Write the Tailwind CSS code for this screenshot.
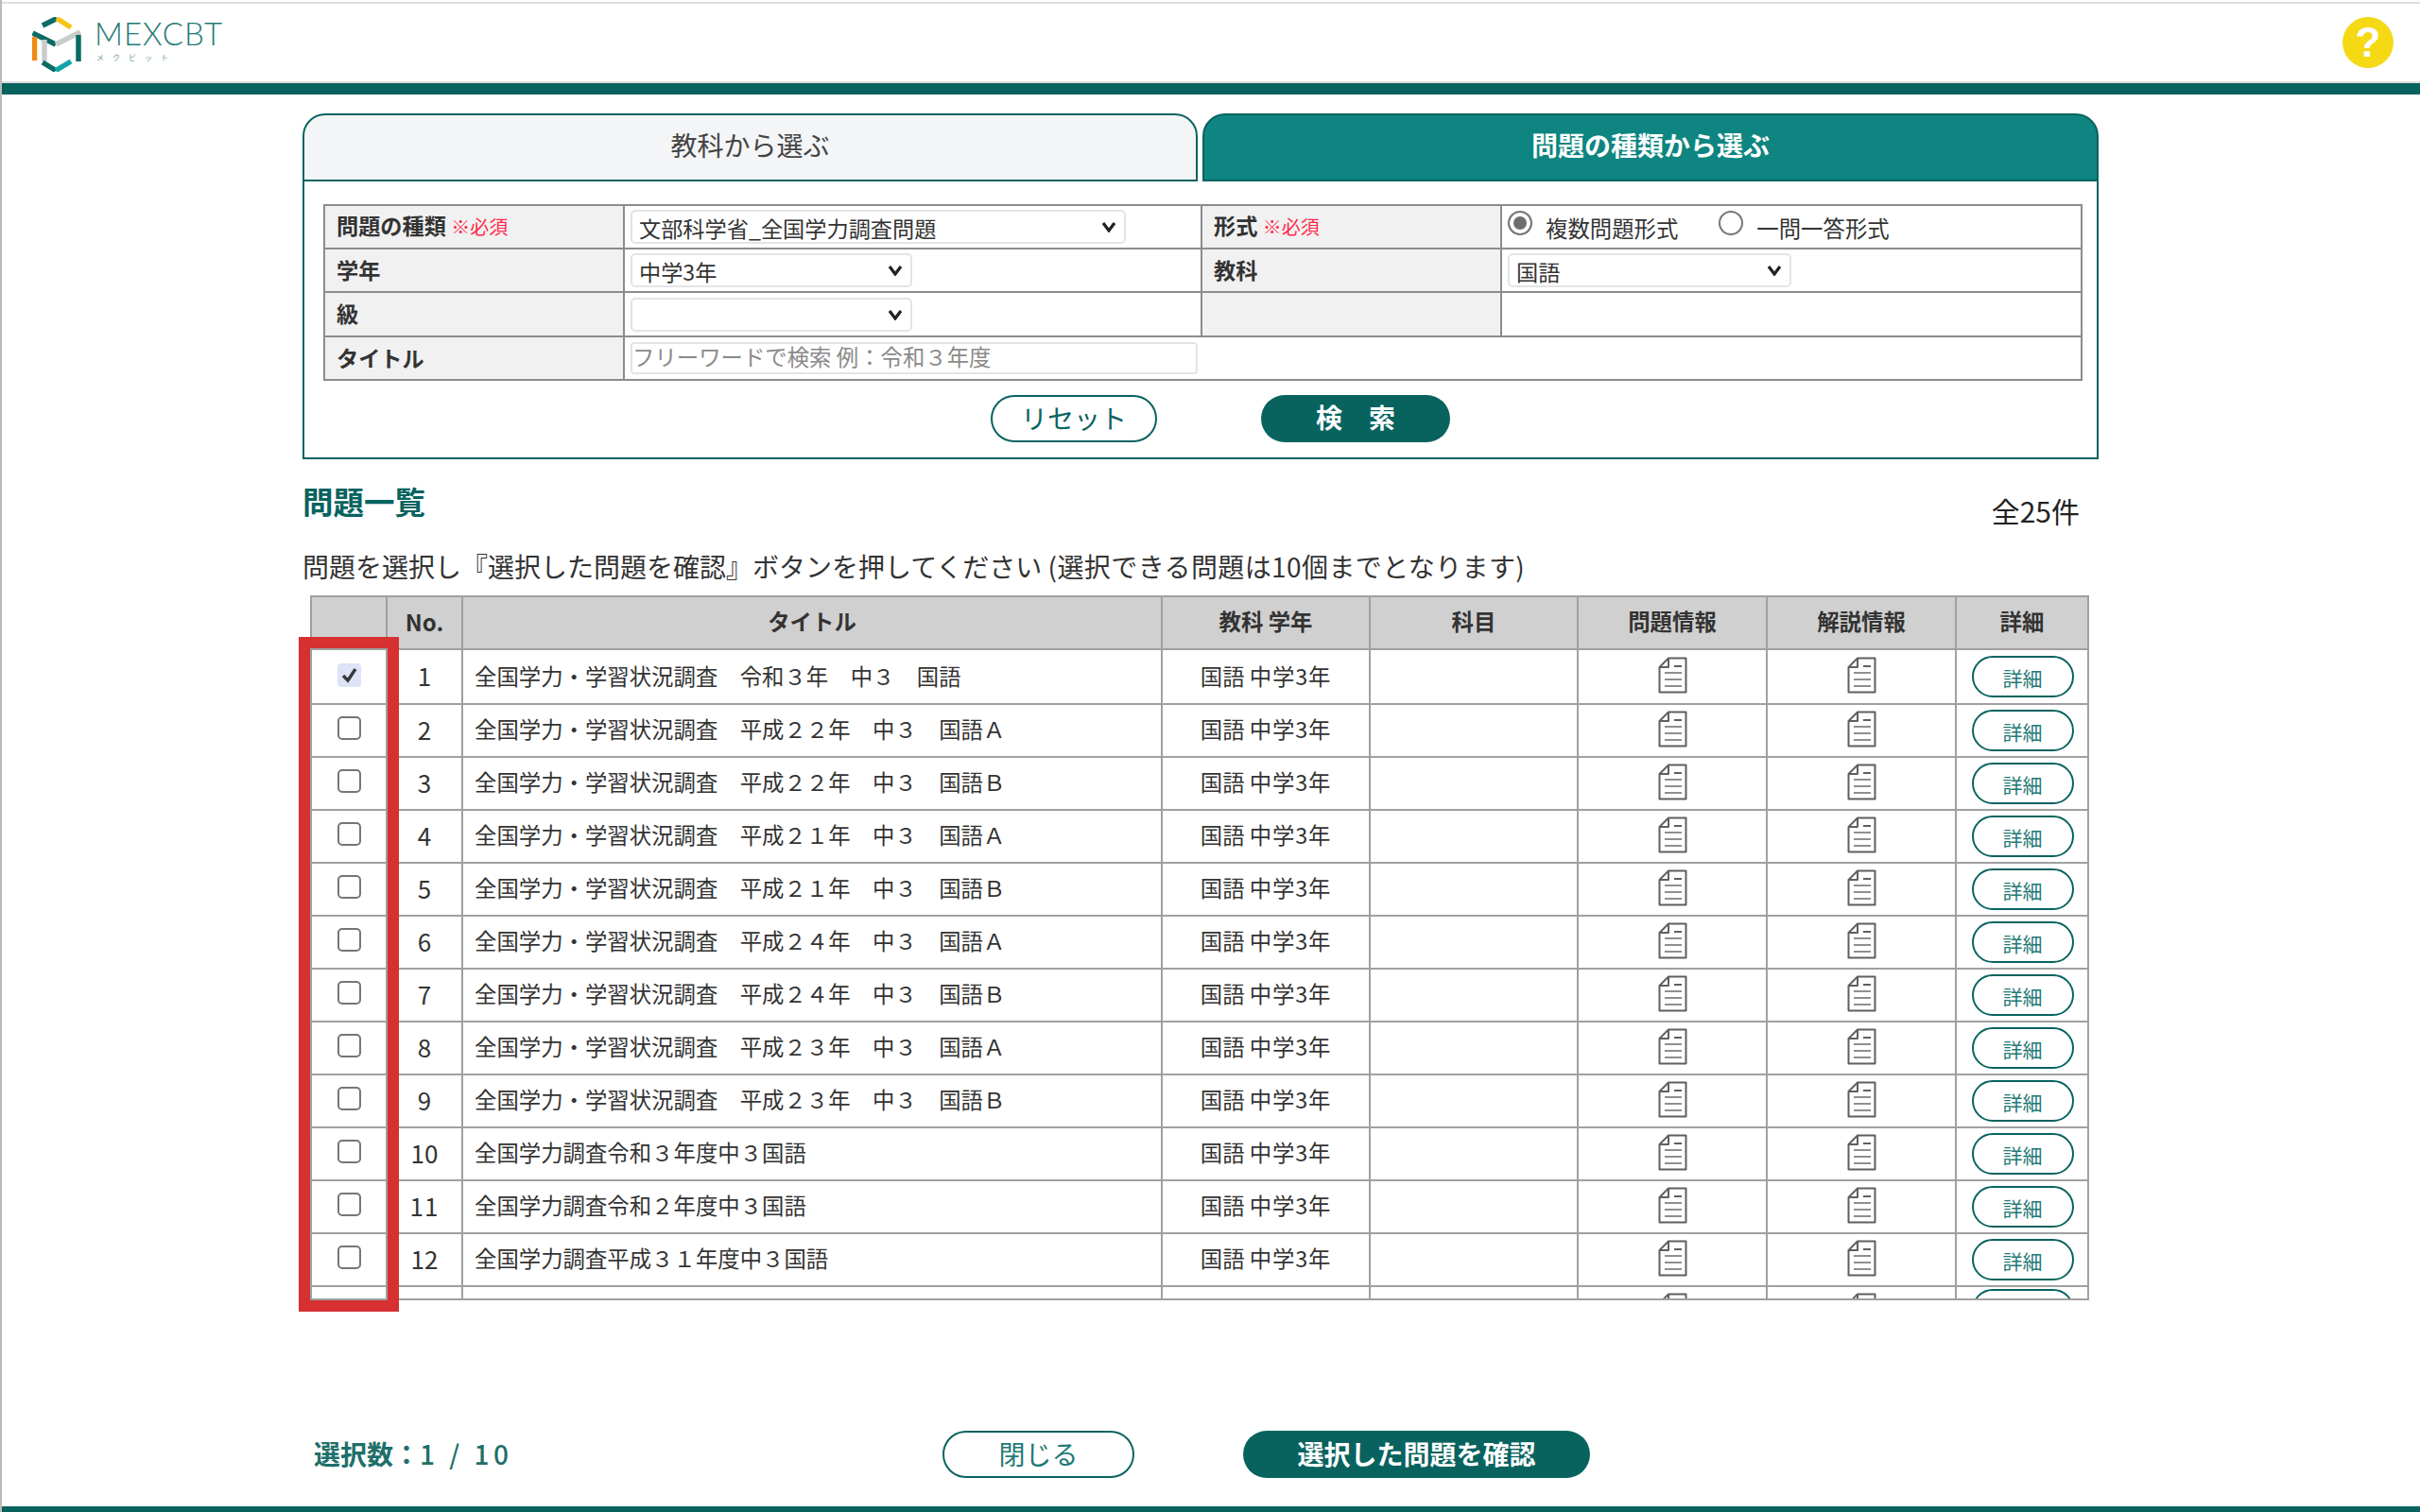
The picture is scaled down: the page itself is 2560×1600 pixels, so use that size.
<!DOCTYPE html>
<html lang="ja">
<head>
<meta charset="utf-8">
<title>MEXCBT</title>
<script src="https://cdn.jsdelivr.net/npm/@tailwindcss/browser@4"></script>
</head>
<body class="bg-white font-['Noto_Sans_CJK_JP','Noto_Sans',sans-serif] text-[#333]">
<svg class="hidden"><defs>
<symbol id="doc" viewBox="0 0 31 39"><g fill="none"><path d="M11 1.5H29.5V37.5H1.5V11Z M11 1.5V11H1.5" stroke="#5f5f5f" stroke-width="2" stroke-linejoin="round"/><path d="M17 10H25" stroke="#5f5f5f" stroke-width="2"/><path d="M7 17H25M7 24H25M7 31H25" stroke="#8f8f8f" stroke-width="2"/></g></symbol>
</defs></svg>
<div class="relative flex flex-col w-[2560px] h-[1600px] overflow-hidden border-l-2 border-[#bcbcbc]">
  <div class="absolute left-[-2px] top-[580px] w-[2px] h-[200px] bg-[#b588a8]"></div>

  <header class="mt-[2px] h-[86px] flex items-center justify-between border-t-2 border-b-2 border-[#dedede] pl-[32px] pr-[28px]">
    <div class="flex items-start">
      <svg class="w-[52px] h-[58px] mt-[3px]" viewBox="0 0 52 58" fill="none" stroke-width="5.5">
        <path d="M11 9L26 1.5" stroke="#0b6b66"/>
        <path d="M26 1.5L41 11" stroke="#f5c518"/>
        <path d="M0.5 17L25 29" stroke="#0b6b66"/>
        <path d="M25 29L51 16" stroke="#c9cccc"/>
        <path d="M2.5 21V46" stroke="#f08a12"/>
        <path d="M13 24V47" stroke="#c9cccc"/>
        <path d="M49 19V47" stroke="#0b6b66"/>
        <path d="M11 48L25 56.5" stroke="#0b6b66"/>
        <path d="M25 56.5L41 47" stroke="#12a5a8"/>
      </svg>
      <div class="ml-[14px] mt-[1px] flex flex-col">
        <span class="font-['Lato',sans-serif] font-light text-[33px] leading-[38px] tracking-[1px] text-[#1f7a75]">MEXCBT</span>
        <span class="ml-[2px] mt-[2px] text-[8px] leading-[10px] tracking-[9px] text-[#6f9a97]">メクビット</span>
      </div>
    </div>
    <div class="w-[54px] h-[54px] rounded-full bg-[#f4d914] flex items-center justify-center text-white font-['Liberation_Sans',sans-serif] font-bold text-[44px] leading-none">?</div>
  </header>
  <div class="h-[12px] bg-[#08635f]"></div>

  <main class="pl-[318px] w-[2218px]">
    <div class="mt-[20px] flex gap-[5px] h-[72px]">
      <div class="w-[947px] flex items-center justify-center pb-[7px] rounded-t-[24px] border-2 border-[#08635f] bg-[#f4f5f7] text-[28px] text-[#444]">教科から選ぶ</div>
      <div class="w-[948px] flex items-center justify-center pb-[7px] rounded-t-[24px] border-2 border-[#08635f] bg-[#0e8580] text-[28px] font-bold text-white">問題の種類から選ぶ</div>
    </div>

    <section class="border-2 border-t-0 border-[#08635f] pl-[20px] pt-[24px] pb-[16px] w-[1900px]">
      <table class="table-fixed border-collapse w-[1860px] text-[23.4px]">
        <colgroup><col class="w-[317px]"><col class="w-[611px]"><col class="w-[317px]"><col class="w-[614px]"></colgroup>
        <tbody>
          <tr class="h-[46px]">
            <th class="border-2 border-[#8c8c8c] bg-[#f1f1f1] text-left font-bold pl-[12px] pb-[3px] text-[23.2px] whitespace-nowrap">問題の種類 <span class="font-normal text-[20px] text-[#ff2a4a]">※必須</span></th>
            <td class="border-2 border-[#8c8c8c] pl-[6px]">
              <div class="relative w-[524px] h-[36px]">
                <select class="appearance-none block w-full h-full py-0 border-2 border-[#e4e4e4] rounded-[5px] bg-white pl-[7px] leading-normal text-[23.2px]"><option>文部科学省_全国学力調査問題</option></select>
                <svg class="absolute right-[10px] top-[12px] w-[16px] h-[12px] pointer-events-none" viewBox="0 0 16 12" fill="none"><path d="M2 2L8 10L14 2" stroke="#222" stroke-width="3.2"/></svg>
              </div>
            </td>
            <th class="border-2 border-[#8c8c8c] bg-[#f1f1f1] text-left font-bold pl-[12px] pb-[3px] text-[23.2px] whitespace-nowrap">形式 <span class="font-normal text-[20px] text-[#ff2a4a]">※必須</span></th>
            <td class="border-2 border-[#8c8c8c] pl-[6px]">
              <div class="flex items-start h-[40px]">
                <input type="radio" name="fmt" checked class="appearance-none w-[26px] h-[26px] mt-[3px] rounded-full border-2 border-[#777] bg-[#6d6d6d] shadow-[inset_0_0_0_4px_white]">
                <span class="ml-[14px] mt-[5px] leading-[32px] whitespace-nowrap">複数問題形式</span>
                <input type="radio" name="fmt" class="appearance-none w-[26px] h-[26px] mt-[3px] ml-[43px] rounded-full border-2 border-[#777] bg-white">
                <span class="ml-[14px] mt-[5px] leading-[32px] whitespace-nowrap">一問一答形式</span>
              </div>
            </td>
          </tr>
          <tr class="h-[46px]">
            <th class="border-2 border-[#8c8c8c] bg-[#f1f1f1] text-left font-bold pl-[12px] pb-[2px] text-[23.2px]">学年</th>
            <td class="border-2 border-[#8c8c8c] pl-[6px]">
              <div class="relative w-[298px] h-[36px]">
                <select class="appearance-none block w-full h-full py-0 border-2 border-[#e4e4e4] rounded-[5px] bg-white pl-[7px] leading-normal text-[23.2px]"><option>中学3年</option></select>
                <svg class="absolute right-[10px] top-[12px] w-[16px] h-[12px] pointer-events-none" viewBox="0 0 16 12" fill="none"><path d="M2 2L8 10L14 2" stroke="#222" stroke-width="3.2"/></svg>
              </div>
            </td>
            <th class="border-2 border-[#8c8c8c] bg-[#f1f1f1] text-left font-bold pl-[12px] pb-[2px] text-[23.2px]">教科</th>
            <td class="border-2 border-[#8c8c8c] pl-[6px]">
              <div class="relative w-[300px] h-[36px]">
                <select class="appearance-none block w-full h-full py-0 border-2 border-[#e4e4e4] rounded-[5px] bg-white pl-[7px] leading-normal text-[23.2px]"><option>国語</option></select>
                <svg class="absolute right-[10px] top-[12px] w-[16px] h-[12px] pointer-events-none" viewBox="0 0 16 12" fill="none"><path d="M2 2L8 10L14 2" stroke="#222" stroke-width="3.2"/></svg>
              </div>
            </td>
          </tr>
          <tr class="h-[47px]">
            <th class="border-2 border-[#8c8c8c] bg-[#f1f1f1] text-left font-bold pl-[12px] pb-[2px] text-[23.2px]">級</th>
            <td class="border-2 border-[#8c8c8c] pl-[6px]">
              <div class="relative w-[298px] h-[36px]">
                <select class="appearance-none block w-full h-full py-0 border-2 border-[#e4e4e4] rounded-[5px] bg-white pl-[7px] leading-normal text-[23.2px]"><option></option></select>
                <svg class="absolute right-[10px] top-[12px] w-[16px] h-[12px] pointer-events-none" viewBox="0 0 16 12" fill="none"><path d="M2 2L8 10L14 2" stroke="#222" stroke-width="3.2"/></svg>
              </div>
            </td>
            <td class="border-2 border-[#8c8c8c] bg-[#f1f1f1]"></td>
            <td class="border-2 border-[#8c8c8c]"></td>
          </tr>
          <tr class="h-[46px]">
            <th class="border-2 border-[#8c8c8c] bg-[#f1f1f1] text-left font-bold pl-[12px] pb-[2px] text-[23.2px]">タイトル</th>
            <td colspan="3" class="border-2 border-[#8c8c8c] pl-[6px]">
              <input type="text" placeholder="フリーワードで検索 例：令和３年度" class="block w-[600px] h-[34px] border-2 border-[#e4e4e4] rounded-[4px] pl-0 pb-[2px] text-[23.4px] leading-normal placeholder:text-[#8a8a8a]">
            </td>
          </tr>
        </tbody>
      </table>
      <div class="flex ml-[706px] mt-[15px] gap-[110px]">
        <button class="w-[176px] h-[50px] pb-[3px] rounded-full border-2 border-[#08635f] bg-white text-[28px] text-[#08635f] leading-none">リセット</button>
        <button class="w-[200px] h-[50px] pb-[4px] rounded-full bg-[#08635f] text-[28px] font-bold text-white leading-none">検　索</button>
      </div>
    </section>

    <div class="mt-[22px] flex justify-between items-start h-[46px]">
      <h2 class="text-[32.5px] leading-[44px] font-bold text-[#08635f]">問題一覧</h2>
      <span class="mr-[20px] mt-[12px] text-[30px] leading-[40px] text-[#222]">全25件</span>
    </div>
    <p class="mt-[25px] text-[28px] leading-[40px] whitespace-nowrap">問題を選択し『選択した問題を確認』ボタンを押してください <span class="tracking-[0.4px]">(選択できる問題は10個までとなります)</span></p>

    <div class="relative mt-[11px] ml-[8px] w-[1882px]">
      <div class="h-[746px] overflow-hidden border-b-2 border-[#a0a0a0]">
        <table class="table-fixed border-collapse w-[1882px] text-[23.4px]">
          <colgroup><col class="w-[80px]"><col class="w-[80px]"><col class="w-[740px]"><col class="w-[220px]"><col class="w-[220px]"><col class="w-[200px]"><col class="w-[200px]"><col class="w-[140px]"></colgroup>
          <thead>
            <tr class="h-[56px] bg-[#d0d0d0] font-bold text-[23.4px]">
              <th class="border-2 border-[#a0a0a0]"></th>
              <th class="border-2 border-[#a0a0a0] pb-[2px] text-[24px]">No.</th>
              <th class="border-2 border-[#a0a0a0] pb-[2px]">タイトル</th>
              <th class="border-2 border-[#a0a0a0] pb-[2px]">教科 学年</th>
              <th class="border-2 border-[#a0a0a0] pb-[2px]">科目</th>
              <th class="border-2 border-[#a0a0a0] pb-[2px]">問題情報</th>
              <th class="border-2 border-[#a0a0a0] pb-[2px]">解説情報</th>
              <th class="border-2 border-[#a0a0a0] pb-[2px]">詳細</th>
            </tr>
          </thead>
          <tbody>
            <tr class="h-[58px]">
              <td class="border-2 border-[#a0a0a0] text-center"><span class="inline-flex align-middle items-center justify-center w-[25px] h-[25px] mb-[8px] rounded-[4px] bg-[#dfe3f7]"><svg class="w-[19px] h-[19px]" viewBox="0 0 19 19" fill="none"><path d="M3 10L8 15L16 3" stroke="#3a3a3a" stroke-width="3.4"/></svg></span></td>
              <td class="border-2 border-[#a0a0a0] pb-[4px] text-center text-[26px]">1</td>
              <td class="border-2 border-[#a0a0a0] pb-[1px] pl-[12px] whitespace-nowrap">全国学力・学習状況調査　令和３年　中３　国語</td>
              <td class="border-2 border-[#a0a0a0] pb-[1px] text-center">国語 <span class="tracking-[0.8px]">中学3年</span></td>
              <td class="border-2 border-[#a0a0a0]"></td>
              <td class="border-2 border-[#a0a0a0]"><svg class="block mx-auto mb-[3px] w-[31px] h-[39px]"><use href="#doc"/></svg></td>
              <td class="border-2 border-[#a0a0a0]"><svg class="block mx-auto mb-[3px] w-[31px] h-[39px]"><use href="#doc"/></svg></td>
              <td class="border-2 border-[#a0a0a0] text-center"><button class="ml-[1px] w-[108px] h-[44px] pt-[2px] rounded-full border-2 border-[#08635f] bg-white text-[21px] text-[#1f7a75] leading-none">詳細</button></td>
            </tr>
            <tr class="h-[56px]">
              <td class="border-2 border-[#a0a0a0] text-center"><input type="checkbox" class="appearance-none block mx-auto mb-[6px] w-[25px] h-[25px] rounded-[5px] border-2 border-[#767676] bg-white"></td>
              <td class="border-2 border-[#a0a0a0] pb-[4px] text-center text-[26px]">2</td>
              <td class="border-2 border-[#a0a0a0] pb-[2px] pl-[12px] whitespace-nowrap">全国学力・学習状況調査　平成２２年　中３　国語Ａ</td>
              <td class="border-2 border-[#a0a0a0] pb-[2px] text-center">国語 <span class="tracking-[0.8px]">中学3年</span></td>
              <td class="border-2 border-[#a0a0a0]"></td>
              <td class="border-2 border-[#a0a0a0]"><svg class="block mx-auto mb-[3px] w-[31px] h-[39px]"><use href="#doc"/></svg></td>
              <td class="border-2 border-[#a0a0a0]"><svg class="block mx-auto mb-[3px] w-[31px] h-[39px]"><use href="#doc"/></svg></td>
              <td class="border-2 border-[#a0a0a0] text-center"><button class="ml-[1px] w-[108px] h-[44px] pt-[2px] rounded-full border-2 border-[#08635f] bg-white text-[21px] text-[#1f7a75] leading-none">詳細</button></td>
            </tr>
            <tr class="h-[56px]">
              <td class="border-2 border-[#a0a0a0] text-center"><input type="checkbox" class="appearance-none block mx-auto mb-[6px] w-[25px] h-[25px] rounded-[5px] border-2 border-[#767676] bg-white"></td>
              <td class="border-2 border-[#a0a0a0] pb-[4px] text-center text-[26px]">3</td>
              <td class="border-2 border-[#a0a0a0] pb-[2px] pl-[12px] whitespace-nowrap">全国学力・学習状況調査　平成２２年　中３　国語Ｂ</td>
              <td class="border-2 border-[#a0a0a0] pb-[2px] text-center">国語 <span class="tracking-[0.8px]">中学3年</span></td>
              <td class="border-2 border-[#a0a0a0]"></td>
              <td class="border-2 border-[#a0a0a0]"><svg class="block mx-auto mb-[3px] w-[31px] h-[39px]"><use href="#doc"/></svg></td>
              <td class="border-2 border-[#a0a0a0]"><svg class="block mx-auto mb-[3px] w-[31px] h-[39px]"><use href="#doc"/></svg></td>
              <td class="border-2 border-[#a0a0a0] text-center"><button class="ml-[1px] w-[108px] h-[44px] pt-[2px] rounded-full border-2 border-[#08635f] bg-white text-[21px] text-[#1f7a75] leading-none">詳細</button></td>
            </tr>
            <tr class="h-[56px]">
              <td class="border-2 border-[#a0a0a0] text-center"><input type="checkbox" class="appearance-none block mx-auto mb-[6px] w-[25px] h-[25px] rounded-[5px] border-2 border-[#767676] bg-white"></td>
              <td class="border-2 border-[#a0a0a0] pb-[4px] text-center text-[26px]">4</td>
              <td class="border-2 border-[#a0a0a0] pb-[2px] pl-[12px] whitespace-nowrap">全国学力・学習状況調査　平成２１年　中３　国語Ａ</td>
              <td class="border-2 border-[#a0a0a0] pb-[2px] text-center">国語 <span class="tracking-[0.8px]">中学3年</span></td>
              <td class="border-2 border-[#a0a0a0]"></td>
              <td class="border-2 border-[#a0a0a0]"><svg class="block mx-auto mb-[3px] w-[31px] h-[39px]"><use href="#doc"/></svg></td>
              <td class="border-2 border-[#a0a0a0]"><svg class="block mx-auto mb-[3px] w-[31px] h-[39px]"><use href="#doc"/></svg></td>
              <td class="border-2 border-[#a0a0a0] text-center"><button class="ml-[1px] w-[108px] h-[44px] pt-[2px] rounded-full border-2 border-[#08635f] bg-white text-[21px] text-[#1f7a75] leading-none">詳細</button></td>
            </tr>
            <tr class="h-[56px]">
              <td class="border-2 border-[#a0a0a0] text-center"><input type="checkbox" class="appearance-none block mx-auto mb-[6px] w-[25px] h-[25px] rounded-[5px] border-2 border-[#767676] bg-white"></td>
              <td class="border-2 border-[#a0a0a0] pb-[4px] text-center text-[26px]">5</td>
              <td class="border-2 border-[#a0a0a0] pb-[2px] pl-[12px] whitespace-nowrap">全国学力・学習状況調査　平成２１年　中３　国語Ｂ</td>
              <td class="border-2 border-[#a0a0a0] pb-[2px] text-center">国語 <span class="tracking-[0.8px]">中学3年</span></td>
              <td class="border-2 border-[#a0a0a0]"></td>
              <td class="border-2 border-[#a0a0a0]"><svg class="block mx-auto mb-[3px] w-[31px] h-[39px]"><use href="#doc"/></svg></td>
              <td class="border-2 border-[#a0a0a0]"><svg class="block mx-auto mb-[3px] w-[31px] h-[39px]"><use href="#doc"/></svg></td>
              <td class="border-2 border-[#a0a0a0] text-center"><button class="ml-[1px] w-[108px] h-[44px] pt-[2px] rounded-full border-2 border-[#08635f] bg-white text-[21px] text-[#1f7a75] leading-none">詳細</button></td>
            </tr>
            <tr class="h-[56px]">
              <td class="border-2 border-[#a0a0a0] text-center"><input type="checkbox" class="appearance-none block mx-auto mb-[6px] w-[25px] h-[25px] rounded-[5px] border-2 border-[#767676] bg-white"></td>
              <td class="border-2 border-[#a0a0a0] pb-[4px] text-center text-[26px]">6</td>
              <td class="border-2 border-[#a0a0a0] pb-[2px] pl-[12px] whitespace-nowrap">全国学力・学習状況調査　平成２４年　中３　国語Ａ</td>
              <td class="border-2 border-[#a0a0a0] pb-[2px] text-center">国語 <span class="tracking-[0.8px]">中学3年</span></td>
              <td class="border-2 border-[#a0a0a0]"></td>
              <td class="border-2 border-[#a0a0a0]"><svg class="block mx-auto mb-[3px] w-[31px] h-[39px]"><use href="#doc"/></svg></td>
              <td class="border-2 border-[#a0a0a0]"><svg class="block mx-auto mb-[3px] w-[31px] h-[39px]"><use href="#doc"/></svg></td>
              <td class="border-2 border-[#a0a0a0] text-center"><button class="ml-[1px] w-[108px] h-[44px] pt-[2px] rounded-full border-2 border-[#08635f] bg-white text-[21px] text-[#1f7a75] leading-none">詳細</button></td>
            </tr>
            <tr class="h-[56px]">
              <td class="border-2 border-[#a0a0a0] text-center"><input type="checkbox" class="appearance-none block mx-auto mb-[6px] w-[25px] h-[25px] rounded-[5px] border-2 border-[#767676] bg-white"></td>
              <td class="border-2 border-[#a0a0a0] pb-[4px] text-center text-[26px]">7</td>
              <td class="border-2 border-[#a0a0a0] pb-[2px] pl-[12px] whitespace-nowrap">全国学力・学習状況調査　平成２４年　中３　国語Ｂ</td>
              <td class="border-2 border-[#a0a0a0] pb-[2px] text-center">国語 <span class="tracking-[0.8px]">中学3年</span></td>
              <td class="border-2 border-[#a0a0a0]"></td>
              <td class="border-2 border-[#a0a0a0]"><svg class="block mx-auto mb-[3px] w-[31px] h-[39px]"><use href="#doc"/></svg></td>
              <td class="border-2 border-[#a0a0a0]"><svg class="block mx-auto mb-[3px] w-[31px] h-[39px]"><use href="#doc"/></svg></td>
              <td class="border-2 border-[#a0a0a0] text-center"><button class="ml-[1px] w-[108px] h-[44px] pt-[2px] rounded-full border-2 border-[#08635f] bg-white text-[21px] text-[#1f7a75] leading-none">詳細</button></td>
            </tr>
            <tr class="h-[56px]">
              <td class="border-2 border-[#a0a0a0] text-center"><input type="checkbox" class="appearance-none block mx-auto mb-[6px] w-[25px] h-[25px] rounded-[5px] border-2 border-[#767676] bg-white"></td>
              <td class="border-2 border-[#a0a0a0] pb-[4px] text-center text-[26px]">8</td>
              <td class="border-2 border-[#a0a0a0] pb-[2px] pl-[12px] whitespace-nowrap">全国学力・学習状況調査　平成２３年　中３　国語Ａ</td>
              <td class="border-2 border-[#a0a0a0] pb-[2px] text-center">国語 <span class="tracking-[0.8px]">中学3年</span></td>
              <td class="border-2 border-[#a0a0a0]"></td>
              <td class="border-2 border-[#a0a0a0]"><svg class="block mx-auto mb-[3px] w-[31px] h-[39px]"><use href="#doc"/></svg></td>
              <td class="border-2 border-[#a0a0a0]"><svg class="block mx-auto mb-[3px] w-[31px] h-[39px]"><use href="#doc"/></svg></td>
              <td class="border-2 border-[#a0a0a0] text-center"><button class="ml-[1px] w-[108px] h-[44px] pt-[2px] rounded-full border-2 border-[#08635f] bg-white text-[21px] text-[#1f7a75] leading-none">詳細</button></td>
            </tr>
            <tr class="h-[56px]">
              <td class="border-2 border-[#a0a0a0] text-center"><input type="checkbox" class="appearance-none block mx-auto mb-[6px] w-[25px] h-[25px] rounded-[5px] border-2 border-[#767676] bg-white"></td>
              <td class="border-2 border-[#a0a0a0] pb-[4px] text-center text-[26px]">9</td>
              <td class="border-2 border-[#a0a0a0] pb-[2px] pl-[12px] whitespace-nowrap">全国学力・学習状況調査　平成２３年　中３　国語Ｂ</td>
              <td class="border-2 border-[#a0a0a0] pb-[2px] text-center">国語 <span class="tracking-[0.8px]">中学3年</span></td>
              <td class="border-2 border-[#a0a0a0]"></td>
              <td class="border-2 border-[#a0a0a0]"><svg class="block mx-auto mb-[3px] w-[31px] h-[39px]"><use href="#doc"/></svg></td>
              <td class="border-2 border-[#a0a0a0]"><svg class="block mx-auto mb-[3px] w-[31px] h-[39px]"><use href="#doc"/></svg></td>
              <td class="border-2 border-[#a0a0a0] text-center"><button class="ml-[1px] w-[108px] h-[44px] pt-[2px] rounded-full border-2 border-[#08635f] bg-white text-[21px] text-[#1f7a75] leading-none">詳細</button></td>
            </tr>
            <tr class="h-[56px]">
              <td class="border-2 border-[#a0a0a0] text-center"><input type="checkbox" class="appearance-none block mx-auto mb-[6px] w-[25px] h-[25px] rounded-[5px] border-2 border-[#767676] bg-white"></td>
              <td class="border-2 border-[#a0a0a0] pb-[4px] text-center text-[26px]">10</td>
              <td class="border-2 border-[#a0a0a0] pb-[2px] pl-[12px] whitespace-nowrap">全国学力調査令和３年度中３国語</td>
              <td class="border-2 border-[#a0a0a0] pb-[2px] text-center">国語 <span class="tracking-[0.8px]">中学3年</span></td>
              <td class="border-2 border-[#a0a0a0]"></td>
              <td class="border-2 border-[#a0a0a0]"><svg class="block mx-auto mb-[3px] w-[31px] h-[39px]"><use href="#doc"/></svg></td>
              <td class="border-2 border-[#a0a0a0]"><svg class="block mx-auto mb-[3px] w-[31px] h-[39px]"><use href="#doc"/></svg></td>
              <td class="border-2 border-[#a0a0a0] text-center"><button class="ml-[1px] w-[108px] h-[44px] pt-[2px] rounded-full border-2 border-[#08635f] bg-white text-[21px] text-[#1f7a75] leading-none">詳細</button></td>
            </tr>
            <tr class="h-[56px]">
              <td class="border-2 border-[#a0a0a0] text-center"><input type="checkbox" class="appearance-none block mx-auto mb-[6px] w-[25px] h-[25px] rounded-[5px] border-2 border-[#767676] bg-white"></td>
              <td class="border-2 border-[#a0a0a0] pb-[4px] text-center text-[26px] tracking-[1px]">11</td>
              <td class="border-2 border-[#a0a0a0] pb-[2px] pl-[12px] whitespace-nowrap">全国学力調査令和２年度中３国語</td>
              <td class="border-2 border-[#a0a0a0] pb-[2px] text-center">国語 <span class="tracking-[0.8px]">中学3年</span></td>
              <td class="border-2 border-[#a0a0a0]"></td>
              <td class="border-2 border-[#a0a0a0]"><svg class="block mx-auto mb-[3px] w-[31px] h-[39px]"><use href="#doc"/></svg></td>
              <td class="border-2 border-[#a0a0a0]"><svg class="block mx-auto mb-[3px] w-[31px] h-[39px]"><use href="#doc"/></svg></td>
              <td class="border-2 border-[#a0a0a0] text-center"><button class="ml-[1px] w-[108px] h-[44px] pt-[2px] rounded-full border-2 border-[#08635f] bg-white text-[21px] text-[#1f7a75] leading-none">詳細</button></td>
            </tr>
            <tr class="h-[56px]">
              <td class="border-2 border-[#a0a0a0] text-center"><input type="checkbox" class="appearance-none block mx-auto mb-[6px] w-[25px] h-[25px] rounded-[5px] border-2 border-[#767676] bg-white"></td>
              <td class="border-2 border-[#a0a0a0] pb-[4px] text-center text-[26px]">12</td>
              <td class="border-2 border-[#a0a0a0] pb-[2px] pl-[12px] whitespace-nowrap">全国学力調査平成３１年度中３国語</td>
              <td class="border-2 border-[#a0a0a0] pb-[2px] text-center">国語 <span class="tracking-[0.8px]">中学3年</span></td>
              <td class="border-2 border-[#a0a0a0]"></td>
              <td class="border-2 border-[#a0a0a0]"><svg class="block mx-auto mb-[3px] w-[31px] h-[39px]"><use href="#doc"/></svg></td>
              <td class="border-2 border-[#a0a0a0]"><svg class="block mx-auto mb-[3px] w-[31px] h-[39px]"><use href="#doc"/></svg></td>
              <td class="border-2 border-[#a0a0a0] text-center"><button class="ml-[1px] w-[108px] h-[44px] pt-[2px] rounded-full border-2 border-[#08635f] bg-white text-[21px] text-[#1f7a75] leading-none">詳細</button></td>
            </tr>
            <tr class="h-[56px]">
              <td class="border-2 border-[#a0a0a0]"></td>
              <td class="border-2 border-[#a0a0a0]"></td>
              <td class="border-2 border-[#a0a0a0]"></td>
              <td class="border-2 border-[#a0a0a0]"></td>
              <td class="border-2 border-[#a0a0a0]"></td>
              <td class="border-2 border-[#a0a0a0]"><svg class="block mx-auto mb-[3px] w-[31px] h-[39px]"><use href="#doc"/></svg></td>
              <td class="border-2 border-[#a0a0a0]"><svg class="block mx-auto mb-[3px] w-[31px] h-[39px]"><use href="#doc"/></svg></td>
              <td class="border-2 border-[#a0a0a0] text-center"><button class="ml-[1px] w-[108px] h-[44px] rounded-full border-2 border-[#08635f] bg-white"></button></td>
            </tr>
          </tbody>
        </table>
      </div>
      <div class="absolute left-[-12px] top-[44px] w-[106px] h-[714px] border-[12px] border-[#d63030] pointer-events-none"></div>
    </div>

    <div class="mt-[138px] flex items-center h-[50px]">
      <span class="ml-[12px] w-[665px] pb-[2px] text-[28px] font-bold text-[#1f6f6a] whitespace-nowrap">選択数：<span class="font-medium tracking-[4.5px]">1 / 10</span></span>
      <button class="w-[203px] h-[50px] pb-[2px] rounded-full border-2 border-[#08635f] bg-white text-[28px] text-[#1f7a75] leading-none">閉じる</button>
      <button class="ml-[115px] w-[367px] h-[50px] pb-[2px] rounded-full bg-[#08635f] text-[28px] font-bold text-white leading-none">選択した問題を確認</button>
    </div>
  </main>
  <div class="mt-auto h-[6px] bg-[#08635f]"></div>
</div>
</body>
</html>
